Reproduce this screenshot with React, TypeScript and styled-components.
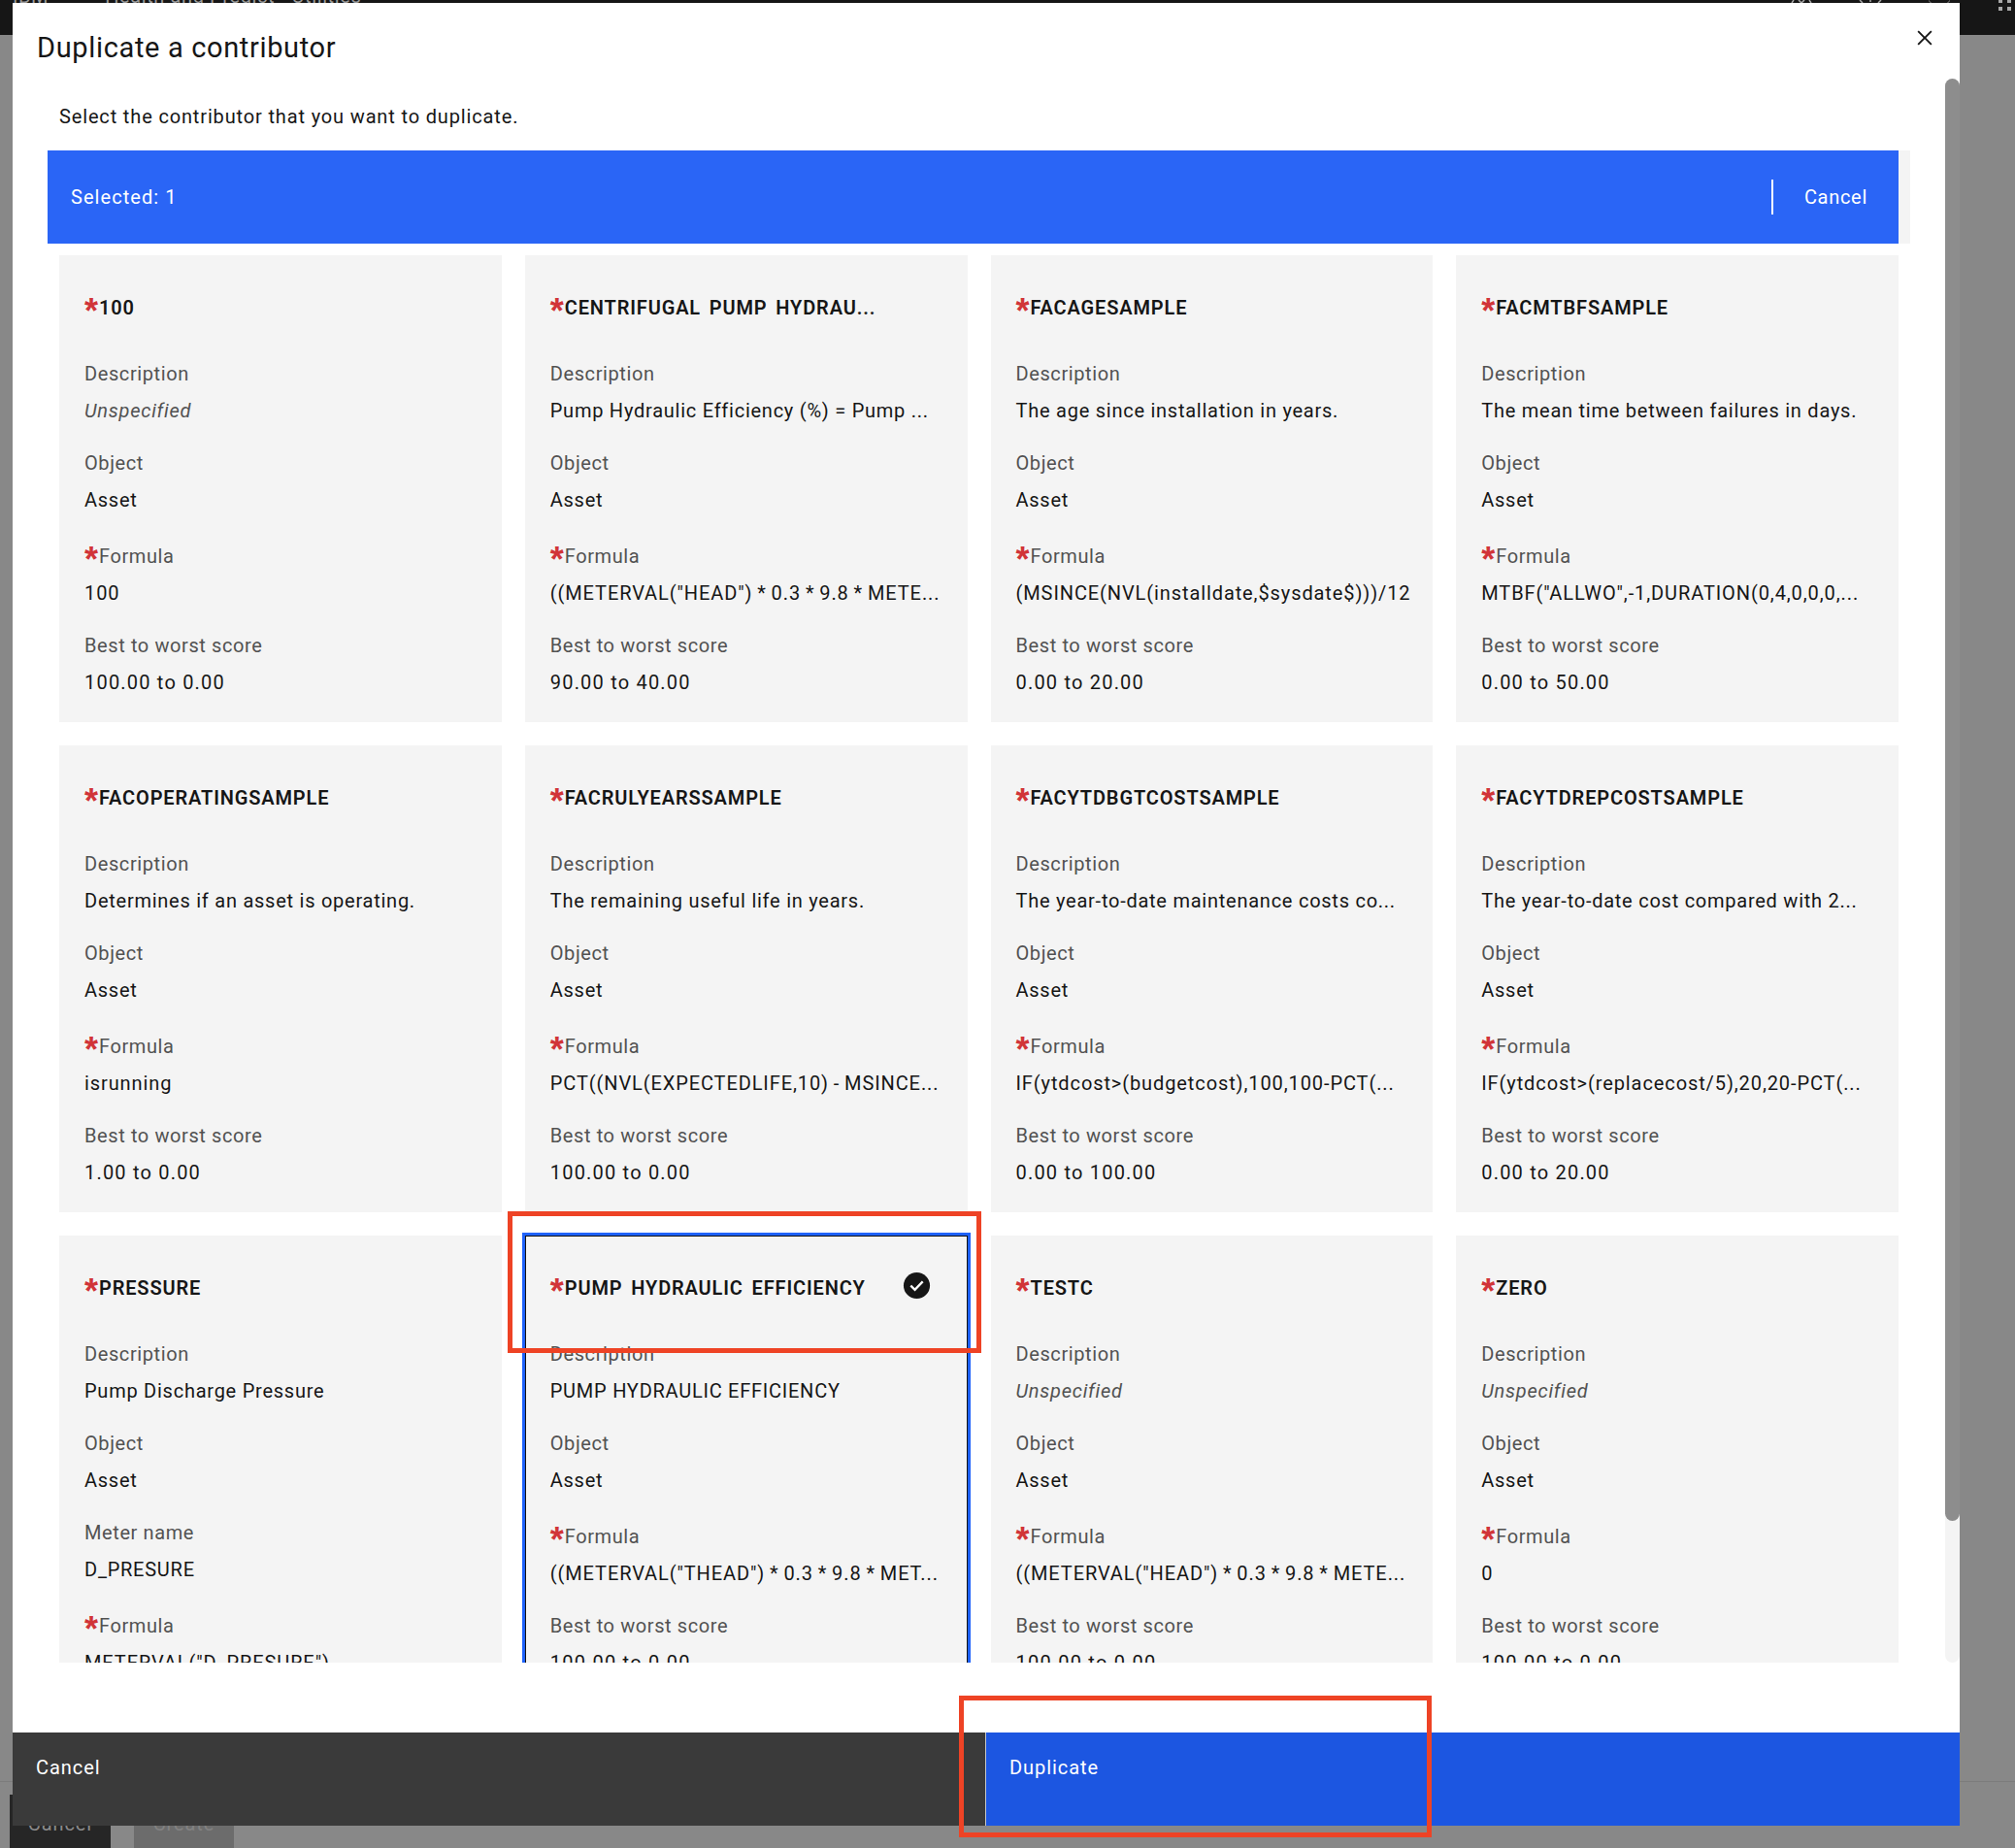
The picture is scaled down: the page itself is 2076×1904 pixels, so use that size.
import styled, { createGlobalStyle } from "styled-components";

const Global = createGlobalStyle`
  html, body {
    margin: 0;
    padding: 0;
    background: #888888;
  }
  body {
    font-family: Roboto, "Noto Sans", "Liberation Sans", sans-serif;
    font-size: 20px;
    color: #161616;
  }
`;

const Page = styled.div`
  position: relative;
  width: 2076px;
  height: 1904px;
  overflow: hidden;
  display: flex;
  flex-direction: column;
  background: #888888;
`;

const TopBar = styled.header`
  height: 36px;
  padding: 0 3px 0 13px;
  display: flex;
  align-items: flex-start;
  background: #161616;
  color: #9a9a9a;
`;
const Brand = styled.div`
  margin-top: -20px;
  line-height: 32px;
  letter-spacing: 0.6px;
  display: flex;
  gap: 58px;
`;
const TopIcons = styled.div`
  margin-left: auto;
  display: flex;
  gap: 45px;
`;

const PageActions = styled.div`
  margin-top: auto;
  height: 69px;
  box-sizing: border-box;
  padding: 13px 0 0 10px;
  display: flex;
  gap: 24px;
  border-top: 1px solid #7c7c7c;
`;
const PageButton = styled.div<{ $muted?: boolean }>`
  width: ${({ $muted }) => ($muted ? "103px" : "104px")};
  padding-top: 11px;
  text-align: center;
  line-height: 38px;
  letter-spacing: 0.9px;
  background: ${({ $muted }) => ($muted ? "#6c6c6c" : "#262626")};
  color: ${({ $muted }) => ($muted ? "#828282" : "#8a8a8a")};
`;

const Modal = styled.section`
  position: absolute;
  left: 13px;
  top: 3px;
  width: 2006px;
  height: 1878px;
  display: flex;
  flex-direction: column;
  background: #ffffff;
`;
const ModalHeader = styled.div`
  height: 98px;
  box-sizing: border-box;
  padding: 21px 21px 0 25px;
  display: flex;
  justify-content: space-between;
  align-items: flex-start;
`;
const Title = styled.h2`
  margin: 7px 0 0;
  font-size: 29px;
  font-weight: 400;
  line-height: 36px;
  letter-spacing: 0.65px;
`;
const ModalBody = styled.div`
  flex: 1;
  min-height: 0;
  margin-bottom: 72px;
  padding-left: 36px;
  overflow: hidden;
`;
const Intro = styled.p`
  margin: 0 0 16px 12px;
  line-height: 38px;
  letter-spacing: 0.85px;
`;
const BatchStrip = styled.div`
  width: 1919px;
  background: #f4f4f4;
`;
const BatchBar = styled.div`
  width: 1907px;
  height: 96px;
  box-sizing: border-box;
  padding: 0 32px 0 24px;
  display: flex;
  align-items: center;
  background: #2a65f6;
  color: #ffffff;
`;
const BatchCount = styled.span`
  letter-spacing: 1.05px;
`;
const BatchCancel = styled.span`
  margin-left: auto;
  padding-left: 32px;
  line-height: 36px;
  border-left: 2px solid #ffffff;
  letter-spacing: 0.7px;
`;

const CardGrid = styled.div`
  width: 1895px;
  margin: 12px 0 0 12px;
  display: grid;
  grid-template-columns: repeat(4, 1fr);
  gap: 24px;
`;
const Card = styled.article<{ $selected?: boolean }>`
  position: relative;
  min-width: 0;
  padding: 35px 26px 22px;
  background: #f4f4f4;
  box-shadow: ${({ $selected }) =>
    $selected ? "inset 0 0 0 1px #111111, 0 0 0 3px #1f62fa" : "none"};
`;
const CardName = styled.h3`
  margin: 0 0 30px;
  font-size: 20px;
  font-weight: 600;
  line-height: 38px;
  letter-spacing: 0.85px;
  word-spacing: 3px;
  white-space: nowrap;
`;
const Required = styled.span`
  display: inline-block;
  width: 15px;
  font-family: "Liberation Sans", sans-serif;
  font-size: 36px;
  font-weight: 700;
  line-height: 0;
  letter-spacing: 0;
  color: #d13438;
  vertical-align: -9px;
`;
const Field = styled.div<{ $required?: boolean }>`
  margin-bottom: 16px;
  padding-top: ${({ $required }) => ($required ? "4px" : "0")};
  &:last-child {
    margin-bottom: 0;
  }
`;
const Label = styled.div`
  line-height: 38px;
  color: #525252;
  letter-spacing: 0.6px;
  white-space: nowrap;
`;
const Value = styled.div<{ $empty?: boolean }>`
  line-height: 38px;
  color: ${({ $empty }) => ($empty ? "#525252" : "#161616")};
  font-style: ${({ $empty }) => ($empty ? "italic" : "normal")};
  letter-spacing: 0.75px;
  white-space: nowrap;
`;
const FormulaValue = styled(Value)`
  letter-spacing: 0.9px;
  word-spacing: -1px;
`;
const ScoreValue = styled(Value)`
  letter-spacing: 1.2px;
`;
const CheckBadge = styled.svg`
  position: absolute;
  top: 36px;
  right: 37px;
  width: 31px;
  height: 31px;
`;

const CloseButton = styled.svg`
  width: 30px;
  height: 30px;
  fill: #161616;
`;

const ScrollTrack = styled.div`
  position: absolute;
  left: 1991px;
  top: 78px;
  width: 15px;
  height: 1632px;
  border-radius: 8px;
  background: #f4f4f4;
`;
const ScrollThumb = styled.div`
  height: 1486px;
  border-radius: 8px;
  background: #8d8d8d;
`;

const ModalFooter = styled.footer`
  height: 96px;
  display: flex;
`;
const FooterButton = styled.div<{ $primary?: boolean }>`
  box-sizing: border-box;
  width: ${({ $primary }) => ($primary ? "auto" : "1002px")};
  flex: ${({ $primary }) => ($primary ? 1 : "none")};
  padding: 17px 0 0 24px;
  line-height: 38px;
  letter-spacing: 0.95px;
  color: #ffffff;
  background: ${({ $primary }) => ($primary ? "#1c56e1" : "#3a3a3a")};
  border-left: ${({ $primary }) => ($primary ? "1px solid #c6c6c6" : "none")};
`;

const Callout = styled.div<{ $x: number; $y: number; $w: number; $h: number }>`
  position: absolute;
  left: ${({ $x }) => $x}px;
  top: ${({ $y }) => $y}px;
  width: ${({ $w }) => $w}px;
  height: ${({ $h }) => $h}px;
  box-sizing: border-box;
  border: 5px solid #ee4325;
  pointer-events: none;
`;

type Contributor = {
  name: string;
  description?: string;
  meter?: string;
  formula: string;
  score: string;
  selected?: boolean;
};

const contributors: Contributor[] = [
  { name: "100", formula: "100", score: "100.00 to 0.00" },
  {
    name: "CENTRIFUGAL PUMP HYDRAU...",
    description: "Pump Hydraulic Efficiency (%) = Pump ...",
    formula: '((METERVAL("HEAD") * 0.3 * 9.8 * METE...',
    score: "90.00 to 40.00",
  },
  {
    name: "FACAGESAMPLE",
    description: "The age since installation in years.",
    formula: "(MSINCE(NVL(installdate,$sysdate$)))/12",
    score: "0.00 to 20.00",
  },
  {
    name: "FACMTBFSAMPLE",
    description: "The mean time between failures in days.",
    formula: 'MTBF("ALLWO",-1,DURATION(0,4,0,0,0,...',
    score: "0.00 to 50.00",
  },
  {
    name: "FACOPERATINGSAMPLE",
    description: "Determines if an asset is operating.",
    formula: "isrunning",
    score: "1.00 to 0.00",
  },
  {
    name: "FACRULYEARSSAMPLE",
    description: "The remaining useful life in years.",
    formula: "PCT((NVL(EXPECTEDLIFE,10) - MSINCE...",
    score: "100.00 to 0.00",
  },
  {
    name: "FACYTDBGTCOSTSAMPLE",
    description: "The year-to-date maintenance costs co...",
    formula: "IF(ytdcost>(budgetcost),100,100-PCT(...",
    score: "0.00 to 100.00",
  },
  {
    name: "FACYTDREPCOSTSAMPLE",
    description: "The year-to-date cost compared with 2...",
    formula: "IF(ytdcost>(replacecost/5),20,20-PCT(...",
    score: "0.00 to 20.00",
  },
  {
    name: "PRESSURE",
    description: "Pump Discharge Pressure",
    meter: "D_PRESURE",
    formula: 'METERVAL("D_PRESURE")',
    score: "100.00 to 0.00",
  },
  {
    name: "PUMP HYDRAULIC EFFICIENCY",
    description: "PUMP HYDRAULIC EFFICIENCY",
    formula: '((METERVAL("THEAD") * 0.3 * 9.8 * MET...',
    score: "100.00 to 0.00",
    selected: true,
  },
  {
    name: "TESTC",
    formula: '((METERVAL("HEAD") * 0.3 * 9.8 * METE...',
    score: "100.00 to 0.00",
  },
  { name: "ZERO", formula: "0", score: "100.00 to 0.00" },
];

function ContributorCard({ item }: { item: Contributor }) {
  return (
    <Card $selected={item.selected}>
      <CardName>
        <Required>*</Required>
        {item.name}
      </CardName>
      {item.selected && (
        <CheckBadge viewBox="0 0 16 16">
          <circle cx="8" cy="8" r="7" fill="#161616" />
          <path
            d="M4.8 8.1 7 10.2 11.2 5.9"
            fill="none"
            stroke="#ffffff"
            strokeWidth="1.2"
          />
        </CheckBadge>
      )}
      <Field>
        <Label>Description</Label>
        <Value $empty={!item.description}>
          {item.description ?? "Unspecified"}
        </Value>
      </Field>
      <Field>
        <Label>Object</Label>
        <Value>Asset</Value>
      </Field>
      {item.meter && (
        <Field>
          <Label>Meter name</Label>
          <Value>{item.meter}</Value>
        </Field>
      )}
      <Field $required>
        <Label>
          <Required>*</Required>Formula
        </Label>
        <FormulaValue>{item.formula}</FormulaValue>
      </Field>
      <Field>
        <Label>Best to worst score</Label>
        <ScoreValue>{item.score}</ScoreValue>
      </Field>
    </Card>
  );
}

export default function App() {
  return (
    <Page>
      <Global />
      <TopBar>
        <Brand>
          <span>IBM</span>
          <span>Health and Predict - Utilities</span>
        </Brand>
        <TopIcons>
          <svg width="26" height="3" fill="none" stroke="#a8a8a8" strokeWidth="1.5">
            <path d="M3 3 5 0M10 0 13 3 16 0M21 0 23 3" />
          </svg>
          <svg width="26" height="3" fill="none" stroke="#a8a8a8" strokeWidth="1.5">
            <path d="M2 0 5 3M24 0 21 3M13 0V2" />
          </svg>
          <svg width="88" height="11" fill="#a8a8a8">
            <path d="M2 0 5 3H21L24 0V1L21 4H5L2 1Z" opacity="0.8" />
            <rect x="74" y="-1" width="4" height="4" />
            <rect x="83" y="-1" width="4" height="4" />
            <rect x="74" y="7" width="4" height="4" />
            <rect x="83" y="7" width="4" height="4" />
          </svg>
        </TopIcons>
      </TopBar>
      <PageActions>
        <PageButton>Cancel</PageButton>
        <PageButton $muted>Create</PageButton>
      </PageActions>
      <Modal>
        <ModalHeader>
          <Title>Duplicate a contributor</Title>
          <CloseButton viewBox="0 0 32 32">
            <path d="M24 9.4 22.6 8 16 14.6 9.4 8 8 9.4 14.6 16 8 22.6 9.4 24 16 17.4 22.6 24 24 22.6 17.4 16z" />
          </CloseButton>
        </ModalHeader>
        <ModalBody>
          <Intro>Select the contributor that you want to duplicate.</Intro>
          <BatchStrip>
            <BatchBar>
              <BatchCount>Selected: 1</BatchCount>
              <BatchCancel>Cancel</BatchCancel>
            </BatchBar>
          </BatchStrip>
          <CardGrid>
            {contributors.map((item) => (
              <ContributorCard key={item.name} item={item} />
            ))}
          </CardGrid>
        </ModalBody>
        <ScrollTrack>
          <ScrollThumb />
        </ScrollTrack>
        <ModalFooter>
          <FooterButton>Cancel</FooterButton>
          <FooterButton $primary>Duplicate</FooterButton>
        </ModalFooter>
      </Modal>
      <Callout $x={523} $y={1248} $w={488} $h={146} />
      <Callout $x={988} $y={1747} $w={487} $h={146} />
    </Page>
  );
}
